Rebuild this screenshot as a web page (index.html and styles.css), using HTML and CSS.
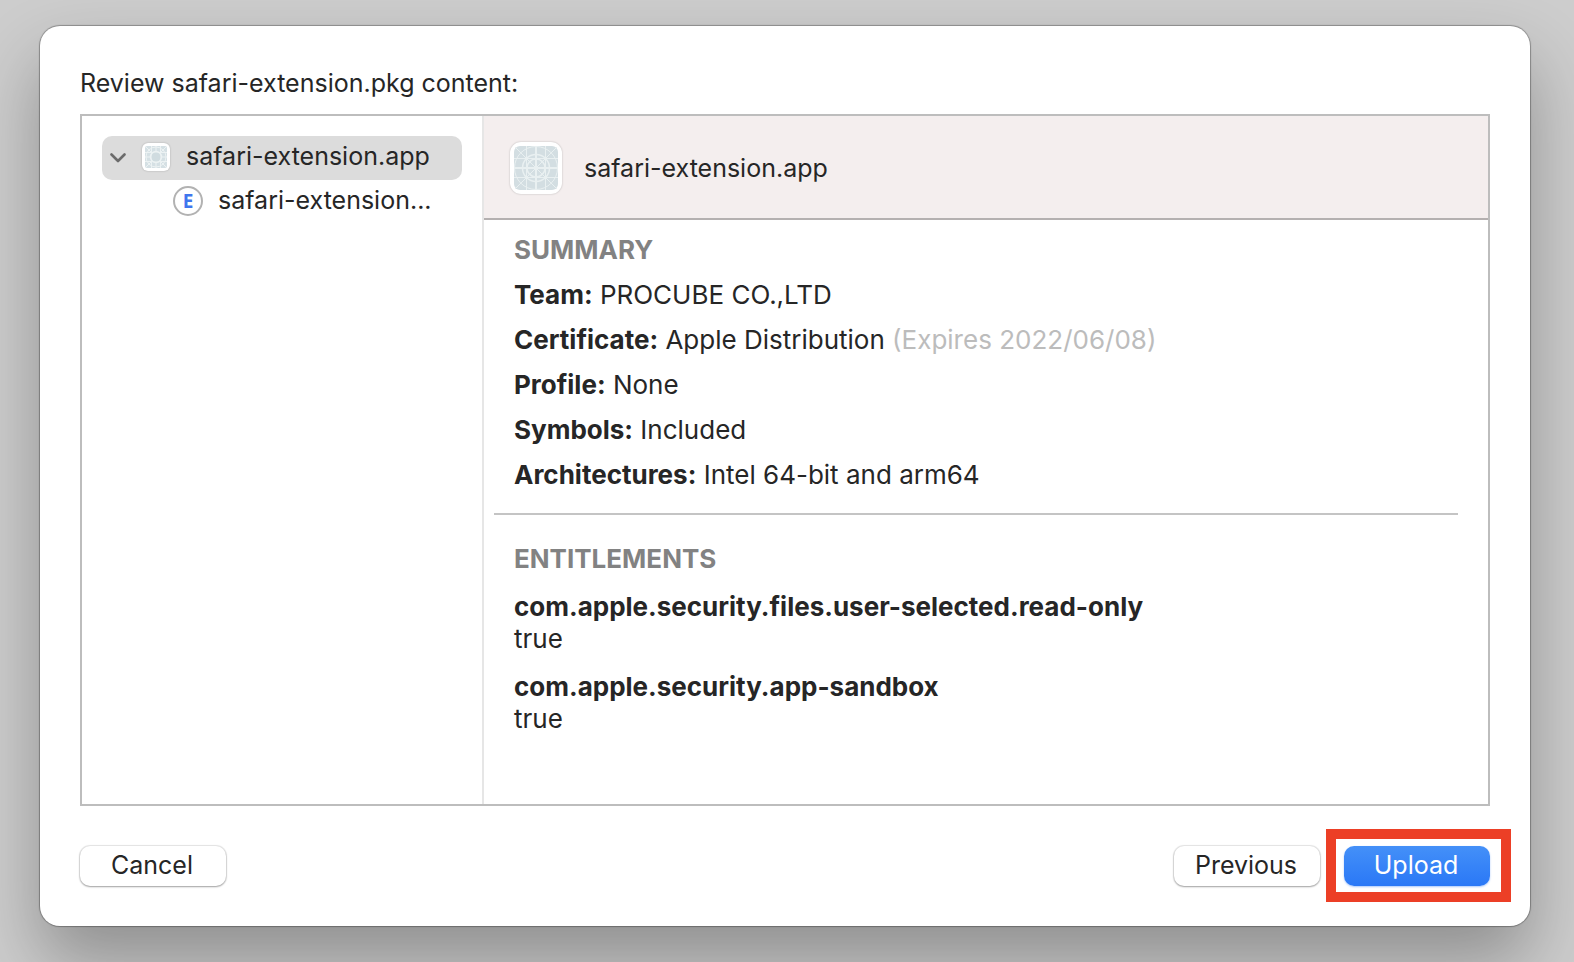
FILE: index.html
```html
<!DOCTYPE html>
<html lang="en">
<head>
<meta charset="utf-8">
<title>Review safari-extension.pkg content</title>
<link rel="stylesheet" href="styles.css">
</head>
<body>
<svg class="defs" width="0" height="0" aria-hidden="true">
  <symbol id="app-grid" viewBox="0 0 44 44">
    <rect width="44" height="44" rx="6" fill="#d3dee2"/>
    <g fill="none" stroke="#e9f0f1" stroke-width="1">
      <path d="M12.500 0V44M31.500 0V44M0 12.500H44M0 31.500H44M1 1L43 43M43 1L1 43"/>
      <circle cx="22" cy="22" r="21.500"/>
      <circle cx="22" cy="22" r="13.500" stroke-width="1.500"/>
      <circle cx="22" cy="22" r="9" stroke-width="1.500"/>
      <path d="M22 0V44M0 22H44" stroke-width="2"/>
    </g>
  </symbol>
  <symbol id="app-grid-small" viewBox="0 0 22 22">
    <rect width="22" height="22" rx="2" fill="#d5e0e4"/>
    <g fill="none" stroke="#ecf2f3" stroke-width="1">
      <path d="M6.500 0V22M15.500 0V22M0 6.500H22M0 15.500H22M1 1L6 6M21 1L16 6M1 21L6 16M21 21L16 16M11 0V5M11 17V22M0 11H5M17 11H22"/>
      <circle cx="11" cy="11" r="10"/>
      <circle cx="11" cy="11" r="5.500" stroke-width="1.500"/>
    </g>
    <circle cx="11" cy="11" r="4.500" fill="#d0dce0"/>
  </symbol>
</svg>
<main class="dialog">
  <h1 class="title">Review safari-extension.pkg content:</h1>
  <div class="browser">
    <nav class="sidebar" aria-label="Package contents">
      <button class="row row-selected" type="button" aria-expanded="true">
        <svg class="chevron" viewBox="0 0 16 10" aria-hidden="true"><path d="M1.500 1.500L8 8L14.500 1.500" fill="none" stroke="#6b6b6b" stroke-width="2.600" stroke-linecap="round" stroke-linejoin="round"/></svg>
        <span class="app-icon app-icon-small"><svg aria-hidden="true"><use href="#app-grid-small"/></svg></span>
        <span class="row-label">safari-extension.app</span>
      </button>
      <button class="row row-child" type="button">
        <span class="badge">E</span>
        <span class="row-label">safari-extension...</span>
      </button>
    </nav>
    <section class="detail">
      <header class="detail-header">
        <span class="app-icon"><svg aria-hidden="true"><use href="#app-grid"/></svg></span>
        <span>safari-extension.app</span>
      </header>
      <div class="summary">
        <h2 class="heading">SUMMARY</h2>
        <p class="line"><b>Team:</b> PROCUBE CO.,LTD</p>
        <p class="line"><b>Certificate:</b> Apple Distribution <span class="muted">(Expires 2022/06/08)</span></p>
        <p class="line"><b>Profile:</b> None</p>
        <p class="line"><b>Symbols:</b> Included</p>
        <p class="line"><b>Architectures:</b> Intel 64-bit and arm64</p>
      </div>
      <hr class="divider">
      <div class="entitlements">
        <h2 class="heading">ENTITLEMENTS</h2>
        <dl class="entry"><dt>com.apple.security.files.user-selected.read-only</dt><dd>true</dd></dl>
        <dl class="entry"><dt>com.apple.security.app-sandbox</dt><dd>true</dd></dl>
      </div>
    </section>
  </div>
  <footer class="actions">
    <button class="button" type="button">Cancel</button>
    <div class="forward">
      <button class="button" type="button">Previous</button>
      <div class="highlight"><button class="button button-primary" type="button">Upload</button></div>
    </div>
  </footer>
</main>
</body>
</html>
```
FILE: styles.css
```css
* { box-sizing: border-box; }

body {
  margin: 0;
  min-height: 100vh;
  display: flex;
  padding: 26px 44px 36px 40px;
  overflow: hidden;
  background: #cdcdcd;
  color: #262626;
  font: 25px/32px Inter, "Liberation Sans", sans-serif;
}

h1, h2, p, dl, dd { margin: 0; }
button { font: inherit; color: inherit; }
.defs { position: absolute; }

.dialog {
  flex: 1;
  min-width: 0;
  display: flex;
  flex-direction: column;
  padding: 40px;
  background: #fff;
  border-radius: 20px;
  box-shadow: 0 0 1px 1px rgba(0, 0, 0, 0.3), 0 36px 70px rgba(0, 0, 0, 0.3);
}

.title {
  padding: 1px 0 15px;
  font-size: 25px;
  font-weight: 400;
}

.browser {
  flex: 1;
  display: flex;
  border: 2px solid #bdbdbd;
}

.sidebar {
  flex: 0 0 402px;
  padding: 20px;
  border-right: 2px solid #e6e6e6;
}

.row {
  display: flex;
  align-items: center;
  width: 100%;
  height: 44px;
  padding: 0 8px 2px;
  border: 0;
  border-radius: 10px;
  background: none;
  text-align: left;
}

.row-selected { background: #dcdcdc; }
.row-child { padding-left: 71px; }
.row-child .row-label { margin-left: 15px; }
.row-label { margin: 0 0 2px 16px; white-space: nowrap; }

.chevron { width: 16px; height: 10px; margin-top: 2px; }

.app-icon {
  display: flex;
  flex: none;
  width: 52px;
  height: 52px;
  padding: 4px;
  border-radius: 11px;
  background: #fff;
  box-shadow: 0 0 2px rgba(0, 0, 0, 0.25);
}

.app-icon svg { width: 100%; height: 100%; }

.app-icon-small {
  width: 28px;
  height: 28px;
  margin-left: 16px;
  padding: 3px;
  border-radius: 6px;
}

.badge {
  display: flex;
  align-items: center;
  justify-content: center;
  width: 30px;
  height: 30px;
  border: 2px solid #b2b2b2;
  border-radius: 50%;
  color: #3f76ee;
  font: 700 19px/20px "Liberation Sans Narrow", "Open Sans", sans-serif;
}

.detail {
  flex: 1;
  min-width: 0;
  font-size: 26px;
}

.detail-header {
  display: flex;
  align-items: center;
  gap: 22px;
  height: 104px;
  padding: 2px 26px 0;
  background: #f4eeee;
  border-bottom: 2px solid #b4b0b0;
  font-size: 25px;
}

.summary {
  display: flex;
  flex-direction: column;
  gap: 13px;
  padding: 14px 30px 22px;
}

.heading {
  color: #828282;
  font-size: 26px;
  font-weight: 700;
}

.muted { color: #bcbcbc; }

.divider {
  height: 2px;
  margin: 0 30px 0 10px;
  border: 0;
  background: #c4c4c4;
}

.entitlements {
  display: flex;
  flex-direction: column;
  gap: 16px;
  padding: 28px 30px;
}

.entry dt { font-weight: 700; }

.actions {
  display: flex;
  justify-content: space-between;
  padding-top: 40px;
}

.forward { display: flex; gap: 24px; }

.button {
  width: 146px;
  height: 40px;
  padding: 0 2px 2px 0;
  border: 0;
  border-radius: 10px;
  background: #fff;
  box-shadow: 0 0 1px 1px rgba(0, 0, 0, 0.1), 0 1px 2px rgba(0, 0, 0, 0.3);
}

.button-primary {
  background: linear-gradient(#4490f8, #2a78f6);
  box-shadow: 0 1px 2px rgba(42, 120, 246, 0.4);
  color: #fff;
}

.highlight { position: relative; }

.highlight::after {
  content: "";
  position: absolute;
  inset: -17px -21px -16px -18px;
  border: 10px solid #ec3f26;
  pointer-events: none;
}
```
